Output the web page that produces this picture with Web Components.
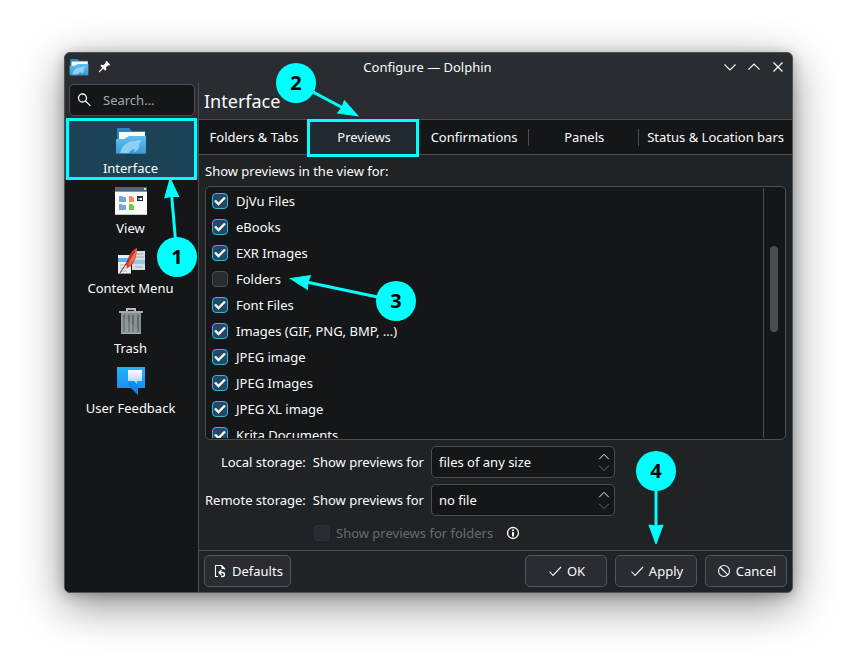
<!DOCTYPE html>
<html lang="en">
<head>
<meta charset="utf-8">
<title>Configure — Dolphin</title>
<style>
  html { background: #fff; }
  body {
    margin: 0;
    font: 13px/18px "Noto Sans", "Open Sans", sans-serif;
    color: #fcfcfc;
    --line: #4b4d50;
    --header: #292c30;
    --panel: #202326;
    --view: #141618;
    --accent: #3daee9;
    --mark: #00ffff;
  }
</style>
</head>
<body>
<desktop-stage>
  <settings-window>
    <window-titlebar slot="titlebar">Configure — Dolphin</window-titlebar>
    <settings-sidebar slot="sidebar">
      <sidebar-item icon="folder" current marked>Interface</sidebar-item>
      <sidebar-item icon="view">View</sidebar-item>
      <sidebar-item icon="context">Context Menu</sidebar-item>
      <sidebar-item icon="trash">Trash</sidebar-item>
      <sidebar-item icon="feedback">User Feedback</sidebar-item>
    </settings-sidebar>
    <span slot="heading">Interface</span>
    <tab-strip slot="tabs">
      <tab-item>Folders &amp; Tabs</tab-item>
      <tab-item current marked>Previews</tab-item>
      <tab-item divided>Confirmations</tab-item>
      <tab-item divided>Panels</tab-item>
      <tab-item>Status &amp; Location bars</tab-item>
    </tab-strip>
    <preview-page slot="page">
      <check-row checked>DjVu Files</check-row>
      <check-row checked>eBooks</check-row>
      <check-row checked>EXR Images</check-row>
      <check-row>Folders</check-row>
      <check-row checked>Font Files</check-row>
      <check-row checked>Images (GIF, PNG, BMP, ...)</check-row>
      <check-row checked>JPEG image</check-row>
      <check-row checked>JPEG Images</check-row>
      <check-row checked>JPEG XL image</check-row>
      <check-row checked>Krita Documents</check-row>
    </preview-page>
    <dialog-button slot="left" icon="reset">Defaults</dialog-button>
    <dialog-button slot="right" icon="ok" wide>OK</dialog-button>
    <dialog-button slot="right" icon="ok" wide>Apply</dialog-button>
    <dialog-button slot="right" icon="cancel" wide>Cancel</dialog-button>
  </settings-window>
  <callout-pointer slot="callouts" style="--x:157px;--y:237px" dx="-7" dy="-79">1</callout-pointer>
  <callout-pointer slot="callouts" style="--x:276px;--y:63px" dx="62" dy="33">2</callout-pointer>
  <callout-pointer slot="callouts" style="--x:376px;--y:281px" dx="-106" dy="-23">3</callout-pointer>
  <callout-pointer slot="callouts" style="--x:636px;--y:451px" dx="0" dy="73">4</callout-pointer>
</desktop-stage>

<script>
const ICONS = {
  folder: `<svg viewBox="0 0 32 32"><defs><linearGradient id="g" x1="0" y1="0" x2="0" y2="1"><stop offset="0" stop-color="#5cc0ee"/><stop offset="1" stop-color="#3b9bd8"/></linearGradient></defs>
    <path d="M2 3h12l3 3h13v11H2z" fill="#2d83bf"/><path d="M4 7h26v10H4z" fill="#fafafa"/>
    <path d="M1 14h8l5-3h17v18H1z" fill="url(#g)"/>
    <path d="M5 29c1-7 6-13 15-13l5-1 2 1-3 2c1 4-1 8-5 9l1-3-4 1-3 4z" fill="#a5d8f3" opacity=".8"/><path d="M1 28h30v1H1z" fill="#2d83bf"/></svg>`,
  view: `<svg viewBox="0 0 32 32"><path d="M0 2h32v28H0z" fill="#fcfcfc"/><path d="M0 2h32v4H0z" fill="#566470"/><path d="M0 6h32v1H0z" fill="#3daee9"/><path d="M0 29h32v1H0z" fill="#c5c9cc"/>
    <circle cx="30" cy="4" r="1" fill="#fff"/><path d="M4 11h3l1 1h3v5H4zM4 19h3l1 1h3v5H4z" fill="#75a5dc"/>
    <path d="M14 11h3l2 2v4h-5z" fill="#f98b4b"/><path d="M14 19h3l2 2v4h-5z" fill="#73c936"/><path d="M22 11h6v5h-6z" fill="#2a2e32"/><path d="M23 13h2v2h-2z" fill="#3daee9"/><path d="M25 13h2v2h-2z" fill="#fff"/></svg>`,
  context: `<svg viewBox="0 0 32 32"><path d="M17 6h13v19H17z" fill="#d9dee2"/><path d="M17 15h13v4H17z" fill="#91c6ed"/><path d="M20 9h8M20 12h9M20 22h8" stroke="#a6adb4"/>
    <path d="M3 10h13v19H3z" fill="#eceff1"/><path d="M3 13h13v4H3z" fill="#61aeea"/><path d="M5 20h8M5 23h8M5 26h7" stroke="#adb4ba"/><path d="M3 28h13v1H3z" fill="#868d93"/>
    <path d="M22 3c-3 1-6 4-8 8l-3 8 1 4c4-1 8-6 9-12z" fill="#d83b2c"/><path d="M22 3c-4 5-7 11-9 18 4-2 7-6 8-10z" fill="#f06a4e"/><path d="M20 6Q13 15 5 28" fill="none" stroke="#7d2b2b" stroke-width="1"/></svg>`,
  trash: `<svg viewBox="0 0 32 32"><path d="M12 6V4h8v2" fill="none" stroke="#b8bdbd" stroke-width="2"/><path d="M4 6h24v2H4z" fill="#a6abab"/><path d="M6 8h20v21H6z" fill="#87908f"/>
    <path d="M9 10v17M14 10v17M18 10v17M23 10v17" stroke="#626b6b" stroke-width="2"/><path d="M6 10l20 17v2H6z" fill="#aab3b0" opacity=".25"/><path d="M6 28h20v1H6z" fill="#a6b1ac"/></svg>`,
  feedback: `<svg viewBox="0 0 32 32"><defs><linearGradient id="b" x1="0" y1="0" x2="0" y2="1"><stop offset="0" stop-color="#20b5fb"/><stop offset="1" stop-color="#1b82f5"/></linearGradient><linearGradient id="w" x1="0" y1="0" x2="0" y2="1"><stop offset="0" stop-color="#fff"/><stop offset="1" stop-color="#a5cdf8"/></linearGradient></defs>
    <path d="M2 2h28v21h-7v7l-7-7H2z" fill="url(#b)"/><path d="M13 16l8 0 2 3v11l-7-7-3-3z" fill="#1367c9" opacity=".3"/><path d="M13 5h14v11h-5v3l-3-3h-6z" fill="url(#w)"/></svg>`,
  pin: `<svg viewBox="0 0 16 16"><g transform="rotate(45 8 8)" fill="#fcfcfc"><path d="M5 1h6v2h-1v4l2 1v2H4V8l2-1V3H5z"/><path d="M7.300 10h1.400v6H7.300z"/></g></svg>`,
  search: `<svg viewBox="0 0 16 16" fill="none" stroke="#fcfcfc" stroke-width="1.3"><circle cx="6.5" cy="6" r="4"/><path d="M9.4 8.9l5 5"/></svg>`,
  down: `<svg viewBox="0 0 16 16" fill="none" stroke="currentColor" stroke-width="1.1"><path d="M2.500 5.500l5.500 5.500 5.500-5.500"/></svg>`,
  up: `<svg viewBox="0 0 16 16" fill="none" stroke="currentColor" stroke-width="1.1"><path d="M2.500 10.500l5.500-5.500 5.500 5.500"/></svg>`,
  close: `<svg viewBox="0 0 16 16" fill="none" stroke="currentColor" stroke-width="1.200"><path d="M3.500 3.500l9 9m0-9l-9 9"/></svg>`,
  ok: `<svg viewBox="0 0 16 16" fill="none" stroke="currentColor" stroke-width="1.1"><path d="M2.500 8.500l3.500 4 8-8.500"/></svg>`,
  cancel: `<svg viewBox="0 0 16 16" fill="none" stroke="currentColor" stroke-width="1.1"><circle cx="8" cy="8" r="5.500"/><path d="M4 4l8 8"/></svg>`,
  reset: `<svg viewBox="0 0 16 16" fill="none" stroke="currentColor" stroke-width="1.1"><path d="M6 13.500H3.500v-11h6l3 3v1"/><path d="M9.500 2v4h4z" fill="currentColor" stroke="none"/><path d="M9.500 7l-2.500 2.500 2.500 2.500M7 9.500h3.500q2 0 2 2t-2 2h-1.500" stroke-width="1.300"/></svg>`,
  info: `<svg viewBox="0 0 16 16" fill="none" stroke="#fcfcfc" stroke-width="1.300"><circle cx="8" cy="8" r="5.500"/><path d="M8 7v4.500M8 4.500v1.500" stroke-width="2"/></svg>`,
  tick: `<svg viewBox="0 0 16 16" fill="none" stroke="#fcfcfc" stroke-width="2.400"><path d="M3 7.500l3.500 3.500L13 4.500"/></svg>`
};

function define(name, render) {
  customElements.define(name, class extends HTMLElement {
    constructor() { super(); this.attachShadow({ mode: "open" }); }
    connectedCallback() {
      const t = document.createElement("template");
      t.innerHTML = `<style>*{box-sizing:border-box} svg{display:block} button{font:inherit;color:inherit;margin:0;padding:0;border:0;background:none}</style>` + render(this);
      this.shadowRoot.replaceChildren(t.content.cloneNode(true));
    }
  });
}

define("ui-icon", el => `<style>:host{display:block;flex:none;width:var(--size,16px);height:var(--size,16px)} svg{width:100%;height:100%}</style>${ICONS[el.getAttribute("name")]}`);

define("desktop-stage", () => `<style>
  :host{display:flex;position:relative;box-sizing:border-box;height:100vh;min-height:480px;padding:52px 64px 76px;overflow:hidden}
  ::slotted(settings-window){flex:1;min-width:0}
</style><slot></slot><slot name="callouts"></slot>`);

define("settings-window", () => `<style>
  :host{display:flex;flex-direction:column;box-sizing:border-box;border:1px solid #505356;border-radius:6px;background:var(--panel);box-shadow:0 12px 44px rgba(0,0,0,.45),0 2px 12px rgba(0,0,0,.25);overflow:hidden}
  .body{display:flex;flex:1;min-height:0;background:var(--header)}
  .main{display:flex;flex-direction:column;flex:1;min-width:0;border-left:1px solid var(--line)}
  h1{margin:0;padding:6px 5px;height:36px;font-size:18px;line-height:24px;font-weight:400}
  .page{display:flex;flex:1;min-height:0;background:var(--panel)}
  ::slotted(preview-page){flex:1;min-width:0}
  footer{display:flex;gap:8px;padding:4px 5px 5px;border-top:1px solid var(--line);background:var(--panel)}
  .space{flex:1}
</style>
<slot name="titlebar"></slot>
<div class="body"><slot name="sidebar"></slot>
  <div class="main"><h1><slot name="heading"></slot></h1><slot name="tabs"></slot>
    <div class="page"><slot name="page"></slot></div>
    <footer><slot name="left"></slot><span class="space"></span><slot name="right"></slot></footer>
  </div></div>`);

define("window-titlebar", () => `<style>
  :host{display:grid;grid-template-columns:1fr auto 1fr;align-items:center;box-sizing:border-box;height:30px;padding:0 6px 2px 4px;background:var(--header)}
  .left{display:flex;align-items:center;gap:8px}
  .folder{--size:20px}
  .pin{--size:14px}
  .right{display:flex;justify-content:flex-end;gap:8px}
</style>
<div class="left"><ui-icon class="folder" name="folder"></ui-icon><button class="pin" aria-label="Keep on all desktops"><ui-icon name="pin"></ui-icon></button></div>
<div><slot></slot></div>
<div class="right"><button aria-label="Minimize"><ui-icon name="down"></ui-icon></button><button aria-label="Maximize"><ui-icon name="up"></ui-icon></button><button aria-label="Close"><ui-icon name="close"></ui-icon></button></div>`);

define("settings-sidebar", () => `<style>
  :host{display:flex;flex-direction:column;width:133px;flex:none}
  .search{display:flex;align-items:center;gap:11px;height:32px;margin:1px 3px 3px 4px;padding:0 6px;border:1px solid var(--line);border-radius:5px;background:var(--view)}
  input{flex:1;min-width:0;padding:0;border:0;outline:0;background:none;color:inherit;font:inherit}
  input::placeholder{color:#a1a9b1;opacity:1}
  nav{flex:1;background:var(--view)}
</style>
<label class="search"><ui-icon name="search"></ui-icon><input type="text" placeholder="Search..." aria-label="Search"></label>
<nav><slot></slot></nav>`);

define("sidebar-item", el => `<style>
  :host{display:block;position:relative}
  button{display:flex;flex-direction:column;align-items:center;gap:2px;width:100%;height:60px;padding:6px 2px 0 0;--size:32px}
  :host([current]) button{background:#1c4256}
  :host([marked])::after{content:"";position:absolute;inset:-1px 1px -1px 1px;border:3px solid var(--mark);z-index:1}
</style><button><ui-icon name="${el.getAttribute("icon")}"></ui-icon><span><slot></slot></span></button>`);

define("tab-strip", () => `<style>
  :host{display:grid;grid-template-columns:repeat(4,1fr) auto;flex:none;height:36px;box-sizing:border-box;border:solid var(--line);border-width:1px 0;background:var(--view)}
</style><slot></slot>`);

define("tab-item", () => `<style>
  :host{display:flex;position:relative;align-items:center}
  button{flex:1;align-self:stretch;padding:0 8px;white-space:nowrap}
  :host([current]) button{background:#212930}
  :host([divided])::before{content:"";position:absolute;right:0;top:9px;bottom:8px;width:1px;background:var(--line)}
  :host([marked])::after{content:"";position:absolute;inset:-1px 0 -3px -2px;border:3px solid var(--mark);z-index:1}
</style><button role="tab"><slot></slot></button>`);

define("check-row", el => `<style>
  :host{display:block}
  label{display:inline-flex;align-items:center;gap:8px;height:26px}
  .box{display:grid;width:16px;height:16px}
  .box>*{grid-area:1/1;width:16px;height:16px;margin:0}
  input{appearance:none;border:1px solid var(--line);border-radius:4px;background:var(--header)}
  input:checked{border-color:var(--accent);background:#224a62}
  ui-icon{display:none;pointer-events:none}
  input:checked+ui-icon{display:block}
  :host([disabled]) label{color:#686b6e;gap:6px}
  :host([disabled]) input{border-color:#2f3236;background:#282b2f}
</style><label><span class="box"><input type="checkbox"${el.hasAttribute("checked") ? " checked" : ""}${el.hasAttribute("disabled") ? " disabled" : ""}><ui-icon name="tick"></ui-icon></span><span><slot></slot></span></label>`);

define("size-spinner", el => `<style>
  :host{display:flex;box-sizing:border-box;width:184px;height:32px;border:1px solid var(--line);border-radius:5px;background:var(--view);padding:0 3px 0 7px}
  input{flex:1;min-width:0;padding:0;border:0;outline:0;background:none;color:inherit;font:inherit}
  .steps{display:flex;flex-direction:column;justify-content:center;--size:14px}
  button{height:11px;overflow:hidden;display:flex;align-items:center}
  button+button{color:#66696c}
</style><input type="text" value="${el.getAttribute("value")}" aria-label="${el.getAttribute("label")}"><span class="steps"><button aria-label="Increase"><ui-icon name="up"></ui-icon></button><button aria-label="Decrease"><ui-icon name="down"></ui-icon></button></span>`);

define("preview-page", () => `<style>
  :host{display:flex;flex-direction:column;padding:7px 6px 4px;box-sizing:border-box;min-height:0}
  .list{display:flex;flex:1;min-height:0;margin:6px 0;border:1px solid var(--line);border-radius:5px;background:var(--view);padding:1px 0;overflow:hidden}
  .rows{flex:1;min-width:0;padding-left:6px;overflow:hidden}
  .track{width:22px;border-left:1px solid var(--line);padding:58px 7px 0 6px}
  .thumb{width:8px;height:86px;border-radius:4px;background:#4b4d4f}
  .form{display:grid;grid-template-columns:max-content max-content max-content;align-items:center;gap:6px 7px}
  .form>:nth-child(3n+1){text-align:right}
  .folders{display:flex;align-items:center;gap:12px;padding:4px 0 0 109px}
</style>
<div>Show previews in the view for:</div>
<div class="list"><div class="rows"><slot></slot></div><div class="track"><div class="thumb"></div></div></div>
<div class="form">
  <span>Local storage:</span><span>Show previews for</span><size-spinner value="files of any size" label="Local storage: Show previews for"></size-spinner>
  <span>Remote storage:</span><span>Show previews for</span><size-spinner value="no file" label="Remote storage: Show previews for"></size-spinner>
</div>
<div class="folders"><check-row disabled>Show previews for folders</check-row><button aria-label="Information"><ui-icon name="info"></ui-icon></button></div>`);

define("dialog-button", el => `<style>
  :host{display:block}
  button{display:flex;align-items:center;justify-content:center;gap:4px;height:32px;padding:0 7px;border:1px solid #54575a;border-radius:5px;background:var(--header)}
  :host([wide]) button{min-width:82px}
</style><button><ui-icon name="${el.getAttribute("icon")}"></ui-icon><span><slot></slot></span></button>`);

define("callout-pointer", el => {
  const dx = +el.getAttribute("dx"), dy = +el.getAttribute("dy");
  const len = Math.round(Math.hypot(dx, dy)), angle = Math.round(Math.atan2(dy, dx) * 180 / Math.PI);
  return `<style>
  :host{display:grid;place-items:center;position:absolute;left:var(--x);top:var(--y);width:40px;height:40px;z-index:2;pointer-events:none;border-radius:50%;background:var(--mark);color:#000;font-size:20px;line-height:24px;font-weight:700}
  svg{position:absolute;inset:0;width:40px;height:40px;overflow:visible}
</style><svg viewBox="-20 -20 40 40" fill="#0ff" stroke="#0ff"><g transform="rotate(${angle})"><path d="M19 0H${len - 14}" stroke-width="3"/><path d="M${len} 0l-19-7 1 7-1 7z" stroke-width="1"/></g></svg><span><slot></slot></span>`;
});
</script>
</body>
</html>
